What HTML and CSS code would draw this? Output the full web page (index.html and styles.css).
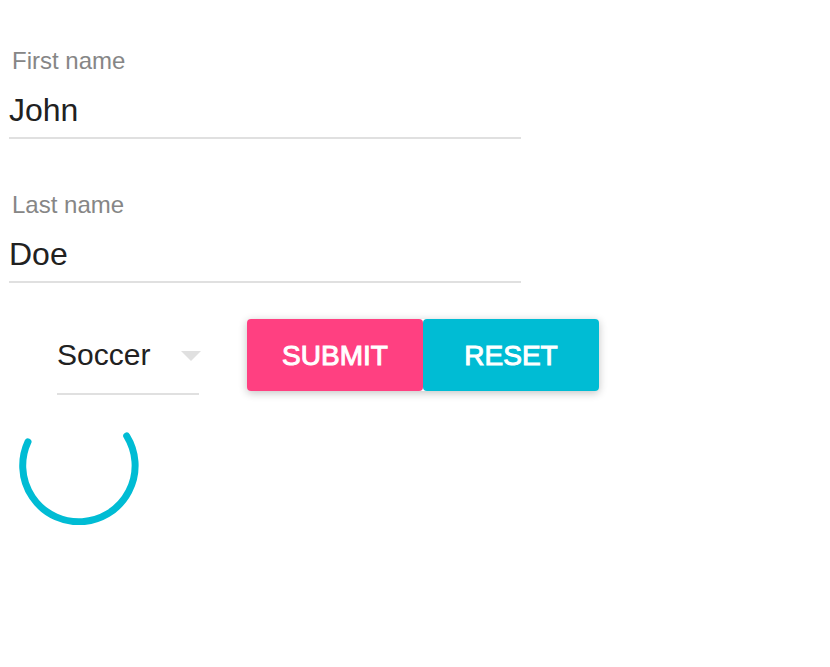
FILE: index.html
```
<!DOCTYPE html>
<html lang="en">
<head>
<meta charset="utf-8">
<meta name="viewport" content="width=device-width, initial-scale=1">
<title>Profile form</title>
<link rel="stylesheet" href="styles.css">
</head>
<body>
<form class="form">
  <div class="fields">
    <div class="field">
      <label class="field-label" for="first">First name</label>
      <input class="field-input" id="first" type="text" value="John">
    </div>
    <div class="field">
      <label class="field-label" for="last">Last name</label>
      <input class="field-input" id="last" type="text" value="Doe">
    </div>
  </div>
  <div class="actions">
    <div class="picker">
      <select class="picker-select" aria-label="Sport">
        <option>Soccer</option>
      </select>
      <svg class="picker-arrow" viewBox="0 0 20 10" aria-hidden="true"><path d="M0 0h20L10 10z"/></svg>
    </div>
    <div class="buttons">
      <button class="button button-submit" type="submit">SUBMIT</button>
      <button class="button button-reset" type="reset">RESET</button>
    </div>
  </div>
  <svg class="spinner" viewBox="0 0 120 120" role="img" aria-label="Loading">
    <path d="M9 36.800A56.200 56.200 0 1 0 107.700 31"/>
  </svg>
</form>
</body>
</html>
```
FILE: styles.css
```
* {
  box-sizing: border-box;
}

body {
  margin: 0;
  background: #fff;
  color: #212121;
  font-family: "Liberation Sans", Arial, sans-serif;
}

.form {
  display: flex;
  flex-direction: column;
  padding: 47px 9px 0;
}

.fields {
  display: flex;
  flex-direction: column;
  gap: 52px;
  max-width: 512px;
}

.field {
  display: flex;
  flex-direction: column;
}

.field-label {
  padding-left: 3px;
  color: #868686;
  font-size: 24px;
  line-height: 28px;
}

.field-input {
  width: 100%;
  height: 64px;
  padding: 16px 0 8px;
  border: 0;
  border-bottom: 2px solid #e0e0e0;
  border-radius: 0;
  outline: 0;
  background: transparent;
  color: inherit;
  font: inherit;
  font-size: 32px;
}

.actions {
  display: flex;
  flex-wrap: wrap;
  align-items: flex-start;
  gap: 48px;
  margin-top: 36px;
  padding-left: 48px;
}

.picker {
  position: relative;
}

.picker-select {
  appearance: none;
  width: 142px;
  height: 76px;
  padding: 0 0 4px;
  border: 0;
  border-bottom: 2px solid #e0e0e0;
  border-radius: 0;
  outline: 0;
  background: transparent;
  color: inherit;
  font: inherit;
  font-size: 30px;
}

.picker-arrow {
  position: absolute;
  top: 32px;
  right: -2px;
  width: 20px;
  height: 10px;
  fill: #e0e0e0;
  pointer-events: none;
}

.buttons {
  display: flex;
  border-radius: 4px;
  box-shadow: 0 2px 8px rgba(0, 0, 0, 0.24);
}

.button {
  width: 176px;
  height: 72px;
  padding: 2px 0 0;
  border: 0;
  border-radius: 4px;
  color: #fff;
  font: inherit;
  font-size: 28px;
  -webkit-text-stroke: 1px #fff;
}

.button-submit {
  background: #ff4081;
}

.button-reset {
  background: #00bcd4;
}

.spinner {
  width: 120px;
  height: 120px;
  margin: 10px 0 0 10px;
  fill: none;
  stroke: #00bcd4;
  stroke-width: 7;
  stroke-linecap: round;
}
```
